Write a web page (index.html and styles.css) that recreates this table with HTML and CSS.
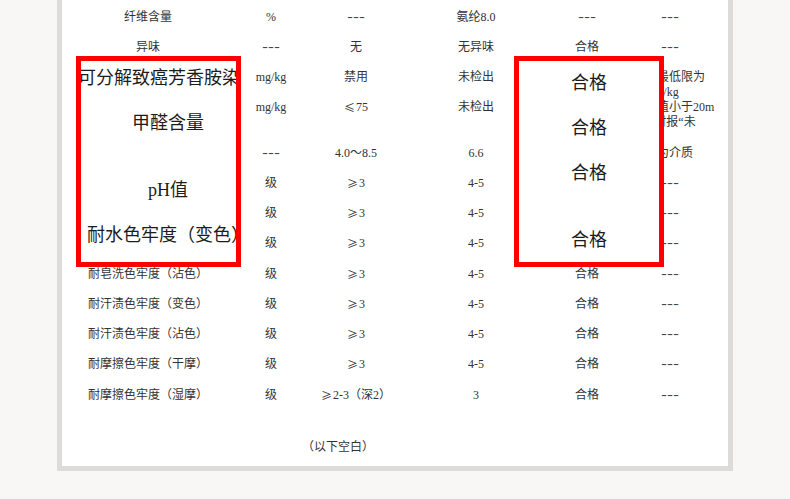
FILE: index.html
```html
<!DOCTYPE html>
<html lang="zh-CN">
<head>
<meta charset="utf-8">
<title>检测报告</title>
<link rel="stylesheet" href="styles.css">
</head>
<body>
<div class="page">
  <div class="sheet">
    <div class="tbl">
      <div class="row">
        <div class="c c1">纤维含量</div><div class="c c2">%</div><div class="c c3"><span class="dash">---</span></div><div class="c c4">氨纶8.0</div><div class="c c5"><span class="dash">---</span></div><div class="c c6"><span class="dash">---</span></div>
      </div>
      <div class="row">
        <div class="c c1">异味</div><div class="c c2"><span class="dash">---</span></div><div class="c c3">无</div><div class="c c4">无异味</div><div class="c c5">合格</div><div class="c c6"><span class="dash">---</span></div>
      </div>
      <div class="row">
        <div class="c c1">可分解致癌芳香胺染料</div><div class="c c2">mg/kg</div><div class="c c3">禁用</div><div class="c c4">未检出</div><div class="c c5">合格</div><div class="c c6 note">检出最低限为<br>20 mg/kg</div>
      </div>
      <div class="row">
        <div class="c c1">甲醛含量</div><div class="c c2">mg/kg</div><div class="c c3"><span class="ge">≤</span>75</div><div class="c c4">未检出</div><div class="c c5">合格</div><div class="c c6 note">测定值小于20m<br>g/kg时报“未<br>检出”</div>
      </div>
      <div class="row">
        <div class="c c1">pH值</div><div class="c c2"><span class="dash">---</span></div><div class="c c3">4.0～8.5</div><div class="c c4">6.6</div><div class="c c5">合格</div><div class="c c6 note">以水为介质</div>
      </div>
      <div class="row">
        <div class="c c1">耐水色牢度（变色）</div><div class="c c2">级</div><div class="c c3"><span class="ge">≥</span>3</div><div class="c c4">4-5</div><div class="c c5">合格</div><div class="c c6"><span class="dash">---</span></div>
      </div>
      <div class="row">
        <div class="c c1">耐水色牢度（沾色）</div><div class="c c2">级</div><div class="c c3"><span class="ge">≥</span>3</div><div class="c c4">4-5</div><div class="c c5">合格</div><div class="c c6"><span class="dash">---</span></div>
      </div>
      <div class="row">
        <div class="c c1">耐皂洗色牢度（变色）</div><div class="c c2">级</div><div class="c c3"><span class="ge">≥</span>3</div><div class="c c4">4-5</div><div class="c c5">合格</div><div class="c c6"><span class="dash">---</span></div>
      </div>
      <div class="row">
        <div class="c c1">耐皂洗色牢度（沾色）</div><div class="c c2">级</div><div class="c c3"><span class="ge">≥</span>3</div><div class="c c4">4-5</div><div class="c c5">合格</div><div class="c c6"><span class="dash">---</span></div>
      </div>
      <div class="row">
        <div class="c c1">耐汗渍色牢度（变色）</div><div class="c c2">级</div><div class="c c3"><span class="ge">≥</span>3</div><div class="c c4">4-5</div><div class="c c5">合格</div><div class="c c6"><span class="dash">---</span></div>
      </div>
      <div class="row">
        <div class="c c1">耐汗渍色牢度（沾色）</div><div class="c c2">级</div><div class="c c3"><span class="ge">≥</span>3</div><div class="c c4">4-5</div><div class="c c5">合格</div><div class="c c6"><span class="dash">---</span></div>
      </div>
      <div class="row">
        <div class="c c1">耐摩擦色牢度（干摩）</div><div class="c c2">级</div><div class="c c3"><span class="ge">≥</span>3</div><div class="c c4">4-5</div><div class="c c5">合格</div><div class="c c6"><span class="dash">---</span></div>
      </div>
      <div class="row">
        <div class="c c1">耐摩擦色牢度（湿摩）</div><div class="c c2">级</div><div class="c c3"><span class="ge">≥</span>2-3（深2）</div><div class="c c4">3</div><div class="c c5">合格</div><div class="c c6"><span class="dash">---</span></div>
      </div>
    </div>
    <div class="blank">（以下空白）</div>

    <div class="box box-left">
      <div class="box-text">
        <div class="big l1">可分解致癌芳香胺染料</div>
        <div class="big l2">甲醛含量</div>
        <div class="big l3">pH值</div>
        <div class="big l4">耐水色牢度（变色）</div>
      </div>
    </div>
    <div class="box box-right">
      <div class="box-text">
        <div class="big r1">合格</div>
        <div class="big r2">合格</div>
        <div class="big r3">合格</div>
        <div class="big r4">合格</div>
      </div>
    </div>
  </div>
</div>
</body>
</html>
```

FILE: styles.css
```css
html, body {
  margin: 0;
  padding: 0;
}
body {
  background: #f8f7f5;
  font-family: "Liberation Serif", "Noto Sans CJK SC", serif;
  color: #333;
}
.page {
  margin-left: 57px;
  width: 666px;
  border: 5px solid #dcdbd9;
  border-top: 0;
  background: #fff;
}
.sheet {
  position: relative;
  height: 466px;
  box-sizing: border-box;
  padding-top: 9.5px;
  overflow: hidden;
}
.tbl {
  display: flex;
  flex-direction: column;
}
.row {
  display: grid;
  grid-template-columns: 140px 106px 64px 176px 66px 80px;
  padding-left: 16px;
  min-height: 30.25px;
  font-size: 12px;
  line-height: 15.125px;
  align-items: start;
}
.c {
  display: flex;
  justify-content: center;
  white-space: nowrap;
  min-width: 0;
}
.c5 {
  padding-right: 20px;
}
.note {
  display: block;
  text-align: left;
  padding-left: 3px;
}
.dash {
  display: inline-block;
  font-family: "Liberation Sans", sans-serif;
  font-size: 12px;
  color: #444;
  transform: scaleX(1.5);
}
.ge {
  font-family: "Noto Sans CJK SC", sans-serif;
  font-size: 11px;
  margin-right: 1px;
}
.blank {
  margin-top: 22.6px;
  padding-left: 240px;
  font-size: 12px;
  line-height: 15.125px;
}
.box {
  position: absolute;
  top: 56px;
  height: 211px;
  box-sizing: border-box;
  border: 5.4px solid #ff0000;
  background: #fff;
  overflow: hidden;
}
.box-left {
  left: 14px;
  width: 165px;
}
.box-right {
  left: 452px;
  width: 150px;
}
.box-text {
  display: flex;
  flex-direction: column;
  align-items: center;
}
.box-left .box-text {
  width: 180px;
  margin-left: -3px;
}
.big {
  font-size: 18px;
  line-height: 20px;
  color: #1c1c1c;
  white-space: nowrap;
}
.l1 { margin-top: 7px; }
.l2 { margin-top: 25px; }
.l3 { margin-top: 47px; }
.l4 { margin-top: 25px; }
.r1 { margin-top: 12px; }
.r2 { margin-top: 25px; }
.r3 { margin-top: 24.5px; }
.r4 { margin-top: 47.5px; }
```
